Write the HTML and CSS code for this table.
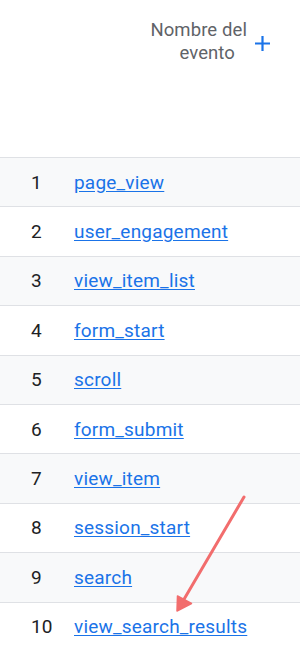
FILE: index.html
```html
<!DOCTYPE html>
<html lang="es">
<head>
<meta charset="utf-8">
<link rel="stylesheet" href="styles.css">
</head>
<body>
<div class="page">
  <div class="head">
    <div class="head-title"><span class="l1">Nombre del</span><span class="l2">evento</span></div>
    <svg class="plus" width="17" height="17" viewBox="0 0 17 17"><path d="M8.5 1v15M1 8.5h15" stroke="#1a73e8" stroke-width="2.2" fill="none"/></svg>
  </div>
  <div class="rows">
    <div class="row odd"><span class="num">1</span><a class="link" href="#">page_view</a></div>
    <div class="row"><span class="num">2</span><a class="link" href="#">user_engagement</a></div>
    <div class="row odd"><span class="num">3</span><a class="link" href="#">view_item_list</a></div>
    <div class="row"><span class="num">4</span><a class="link" href="#">form_start</a></div>
    <div class="row odd"><span class="num">5</span><a class="link" href="#">scroll</a></div>
    <div class="row"><span class="num">6</span><a class="link" href="#">form_submit</a></div>
    <div class="row odd"><span class="num">7</span><a class="link" href="#">view_item</a></div>
    <div class="row"><span class="num">8</span><a class="link" href="#">session_start</a></div>
    <div class="row odd"><span class="num">9</span><a class="link" href="#">search</a></div>
    <div class="row"><span class="num">10</span><a class="link" href="#">view_search_results</a></div>
  </div>
  <svg class="arrow" width="300" height="651" viewBox="0 0 300 651">
    <line x1="244" y1="497" x2="183" y2="601" stroke="#f26d6d" stroke-width="3" stroke-linecap="round"/>
    <polygon points="177,611 177.5,596 191.5,603.5" fill="#f26d6d" stroke="#f26d6d" stroke-width="1.5" stroke-linejoin="round"/>
  </svg>
</div>
</body>
</html>
```
FILE: styles.css
```css
html, body {
  margin: 0;
  padding: 0;
  background: #ffffff;
}
body {
  font-family: Roboto, "Liberation Sans", Arial, sans-serif;
  width: 300px;
  height: 651px;
  overflow: hidden;
}
.page {
  position: relative;
  width: 300px;
  height: 651px;
}
.head {
  height: 157px;
  display: flex;
  justify-content: flex-end;
  align-items: flex-start;
  padding-right: 29px;
  box-sizing: border-box;
  padding-top: 18.5px;
  gap: 7px;
}
.head-title {
  font-size: 18.5px;
  line-height: 23.5px;
  color: #5f6368;
  text-align: right;
  letter-spacing: 0.1px;
}
.head-title .l1,
.head-title .l2 {
  display: block;
}
.head-title .l2 {
  padding-right: 12px;
}
.plus {
  margin-top: 16.5px;
}
.rows {
  border-top: 1px solid #dfe1e5;
}
.row {
  height: 48.4px;
  border-bottom: 1px solid #dfe1e5;
  display: flex;
  align-items: center;
  background: #ffffff;
}
.row.odd {
  background: #f8f9fa;
}
.num {
  width: 43px;
  padding-left: 31px;
  font-size: 19px;
  color: #202124;
  flex: none;
}
.link {
  font-size: 19px;
  color: #1a73e8;
  text-decoration: underline;
  text-underline-offset: 2px;
  letter-spacing: 0.2px;
}
.arrow {
  position: absolute;
  left: 0;
  top: 0;
  pointer-events: none;
}
```
